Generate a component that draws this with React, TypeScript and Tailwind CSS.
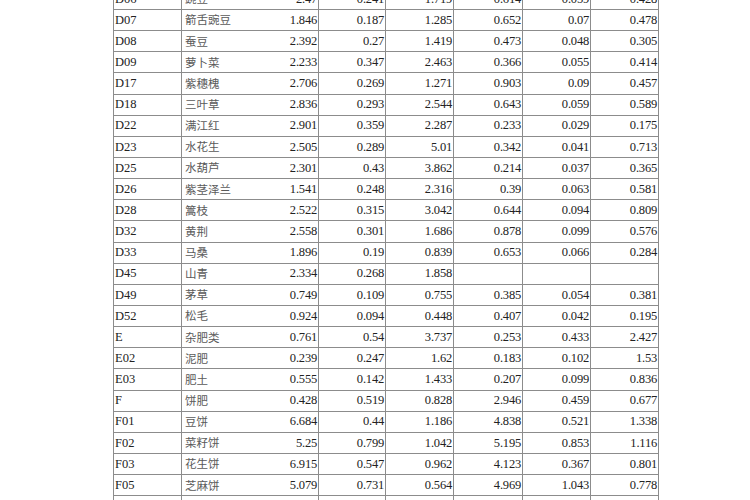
const rows: string[][] = [
  ["D06", "豌豆", "2.47", "0.241", "1.719", "0.614", "0.059", "0.428"],
  ["D07", "箭舌豌豆", "1.846", "0.187", "1.285", "0.652", "0.07", "0.478"],
  ["D08", "蚕豆", "2.392", "0.27", "1.419", "0.473", "0.048", "0.305"],
  ["D09", "萝卜菜", "2.233", "0.347", "2.463", "0.366", "0.055", "0.414"],
  ["D17", "紫穗槐", "2.706", "0.269", "1.271", "0.903", "0.09", "0.457"],
  ["D18", "三叶草", "2.836", "0.293", "2.544", "0.643", "0.059", "0.589"],
  ["D22", "满江红", "2.901", "0.359", "2.287", "0.233", "0.029", "0.175"],
  ["D23", "水花生", "2.505", "0.289", "5.01", "0.342", "0.041", "0.713"],
  ["D25", "水葫芦", "2.301", "0.43", "3.862", "0.214", "0.037", "0.365"],
  ["D26", "紫茎泽兰", "1.541", "0.248", "2.316", "0.39", "0.063", "0.581"],
  ["D28", "篙枝", "2.522", "0.315", "3.042", "0.644", "0.094", "0.809"],
  ["D32", "黄荆", "2.558", "0.301", "1.686", "0.878", "0.099", "0.576"],
  ["D33", "马桑", "1.896", "0.19", "0.839", "0.653", "0.066", "0.284"],
  ["D45", "山青", "2.334", "0.268", "1.858", "", "", ""],
  ["D49", "茅草", "0.749", "0.109", "0.755", "0.385", "0.054", "0.381"],
  ["D52", "松毛", "0.924", "0.094", "0.448", "0.407", "0.042", "0.195"],
  ["E", "杂肥类", "0.761", "0.54", "3.737", "0.253", "0.433", "2.427"],
  ["E02", "泥肥", "0.239", "0.247", "1.62", "0.183", "0.102", "1.53"],
  ["E03", "肥土", "0.555", "0.142", "1.433", "0.207", "0.099", "0.836"],
  ["F", "饼肥", "0.428", "0.519", "0.828", "2.946", "0.459", "0.677"],
  ["F01", "豆饼", "6.684", "0.44", "1.186", "4.838", "0.521", "1.338"],
  ["F02", "菜籽饼", "5.25", "0.799", "1.042", "5.195", "0.853", "1.116"],
  ["F03", "花生饼", "6.915", "0.547", "0.962", "4.123", "0.367", "0.801"],
  ["F05", "芝麻饼", "5.079", "0.731", "0.564", "4.969", "1.043", "0.778"],
  ["", "", "", "", "", "", "", ""],
];

const numCols = ["w-[67px]", "w-[68px]", "w-[69px]", "w-[68px]", "w-[68px]"];

export default function App() {
  return (
    <div className="w-[750px] h-[500px] overflow-hidden bg-white">
      <div className="ml-[113px] mt-[-11.15px] w-[546px] border-l border-[#8c8c8c] font-['Liberation_Serif',serif] text-[12.5px] text-[#222]">
        {rows.map((r, i) => (
          <div key={i} className="flex h-[21.15px] border-b border-[#8c8c8c]">
            <div className="w-[68px] shrink-0 border-r border-[#8c8c8c] pl-[1px] flex items-center">{r[0]}</div>
            <div className="w-[137px] shrink-0 border-r border-[#8c8c8c] pl-[3px] pr-[1px] flex items-center justify-between">
              <span className="font-['Noto_Sans_CJK_SC',sans-serif] text-[11.5px] text-[#5a5a5a]">{r[1]}</span>
              <span className="tracking-[-0.2px]">{r[2]}</span>
            </div>
            {r.slice(3).map((v, j) => (
              <div
                key={j}
                className={`${numCols[j]} shrink-0 border-r border-[#8c8c8c] pr-[1px] flex items-center justify-end tracking-[-0.2px]`}
              >
                {v}
              </div>
            ))}
          </div>
        ))}
      </div>
    </div>
  );
}
